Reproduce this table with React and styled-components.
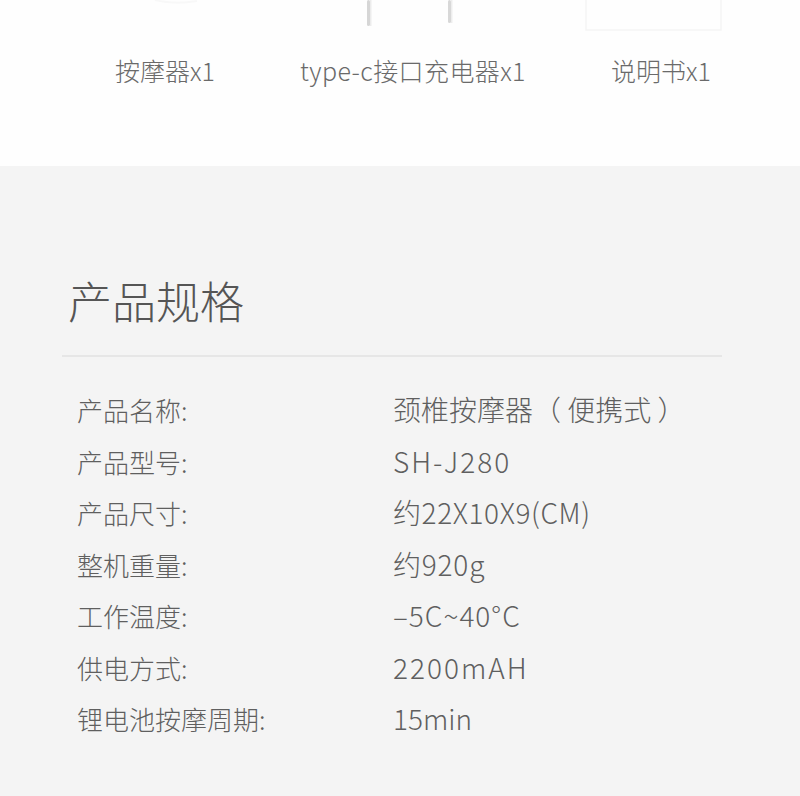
import React from "react"
import styled, { createGlobalStyle } from "styled-components"

const GlobalStyle = createGlobalStyle`
  html, body {
    margin: 0;
    padding: 0;
    background: #f4f4f4;
  }
  body {
    font-family: "Noto Sans CJK SC", "Noto Sans", sans-serif;
    -webkit-font-smoothing: antialiased;
  }
`

const Page = styled.div`
  width: 800px;
  min-height: 796px;
  background: #f4f4f4;
`

const Contents = styled.section`
  background: #fefefe;
  height: 166px;
  display: grid;
  grid-template-columns: repeat(3, 248px);
  padding-left: 41px;
  box-sizing: border-box;
`

const Item = styled.div`
  display: flex;
  flex-direction: column;
  align-items: center;
`

const Picture = styled.div`
  height: 48px;
  width: 100%;
  display: flex;
  justify-content: center;
  margin-left: ${(p) => p.$shift || 0}px;
`

const ItemLabel = styled.div`
  margin-top: 7px;
  font-size: 25px;
  line-height: 30px;
  font-weight: 300;
  color: #6a6a6a;
  white-space: nowrap;
  letter-spacing: ${(p) => p.$spacing || 0}px;
`

const Specs = styled.section`
  padding: 108px 0 40px;
`

const Title = styled.h2`
  margin: 0 0 0 68px;
  font-size: 44px;
  line-height: 52px;
  font-weight: 300;
  color: #555;
`

const Divider = styled.hr`
  margin: 29px 78px 0 62px;
  border: 0;
  height: 2px;
  background: #e6e6e6;
`

const Table = styled.dl`
  margin: 27px 0 0;
  padding-left: 77px;
  display: grid;
  grid-template-columns: 316px 1fr;
  color: #5f5f5f;
  font-weight: 300;
`

const Label = styled.dt`
  margin: 0;
  font-size: 26px;
  line-height: 51.5px;
`

const Value = styled.dd`
  margin: 0;
  font-size: 28px;
  line-height: 51.5px;
  white-space: nowrap;
  letter-spacing: ${(p) => p.$spacing || 0}px;
`

const Massager = () => (
  <svg width="120" height="48" viewBox="0 0 120 48">
    <path d="M30 0 Q50 5 72 1" stroke="#f8f8f8" strokeWidth="2" fill="none" />
  </svg>
)

const Charger = () => (
  <svg width="120" height="48" viewBox="0 0 120 48">
    <rect x="17" y="0" width="3" height="26" rx="1.5" fill="#d6d6d6" />
    <rect x="20" y="0" width="1.5" height="26" fill="#ececec" />
    <rect x="98" y="0" width="3" height="23" rx="1.5" fill="#d8d8d8" />
    <rect x="101" y="0" width="1.5" height="23" fill="#ededed" />
  </svg>
)

const Manual = () => (
  <svg width="150" height="48" viewBox="0 0 150 48">
    <rect x="4" y="-4" width="135" height="34" fill="none" stroke="#f5f5f5" strokeWidth="1.5" />
  </svg>
)

const contents = [
  { label: "按摩器x1", pic: <Massager />, shift: 40 },
  { label: "type-c接口充电器x1", pic: <Charger />, shift: -6, spacing: 0.4 },
  { label: "说明书x1", pic: <Manual />, shift: -8 },
]

const specs = [
  ["产品名称:", "颈椎按摩器（ 便携式 ）", 0],
  ["产品型号:", "SH-J280", 2],
  ["产品尺寸:", "约22X10X9(CM)", 0.6],
  ["整机重量:", "约920g", 0.8],
  ["工作温度:", "–5C~40°C", 1],
  ["供电方式:", "2200mAH", 2],
  ["锂电池按摩周期:", "15min", 0],
]

export default function App() {
  return (
    <Page>
      <GlobalStyle />
      <Contents>
        {contents.map((c) => (
          <Item key={c.label}>
            <Picture $shift={c.shift}>{c.pic}</Picture>
            <ItemLabel $spacing={c.spacing}>{c.label}</ItemLabel>
          </Item>
        ))}
      </Contents>
      <Specs>
        <Title>产品规格</Title>
        <Divider />
        <Table>
          {specs.map(([k, v, s]) => (
            <React.Fragment key={k}>
              <Label>{k}</Label>
              <Value $spacing={s}>{v}</Value>
            </React.Fragment>
          ))}
        </Table>
      </Specs>
    </Page>
  )
}
